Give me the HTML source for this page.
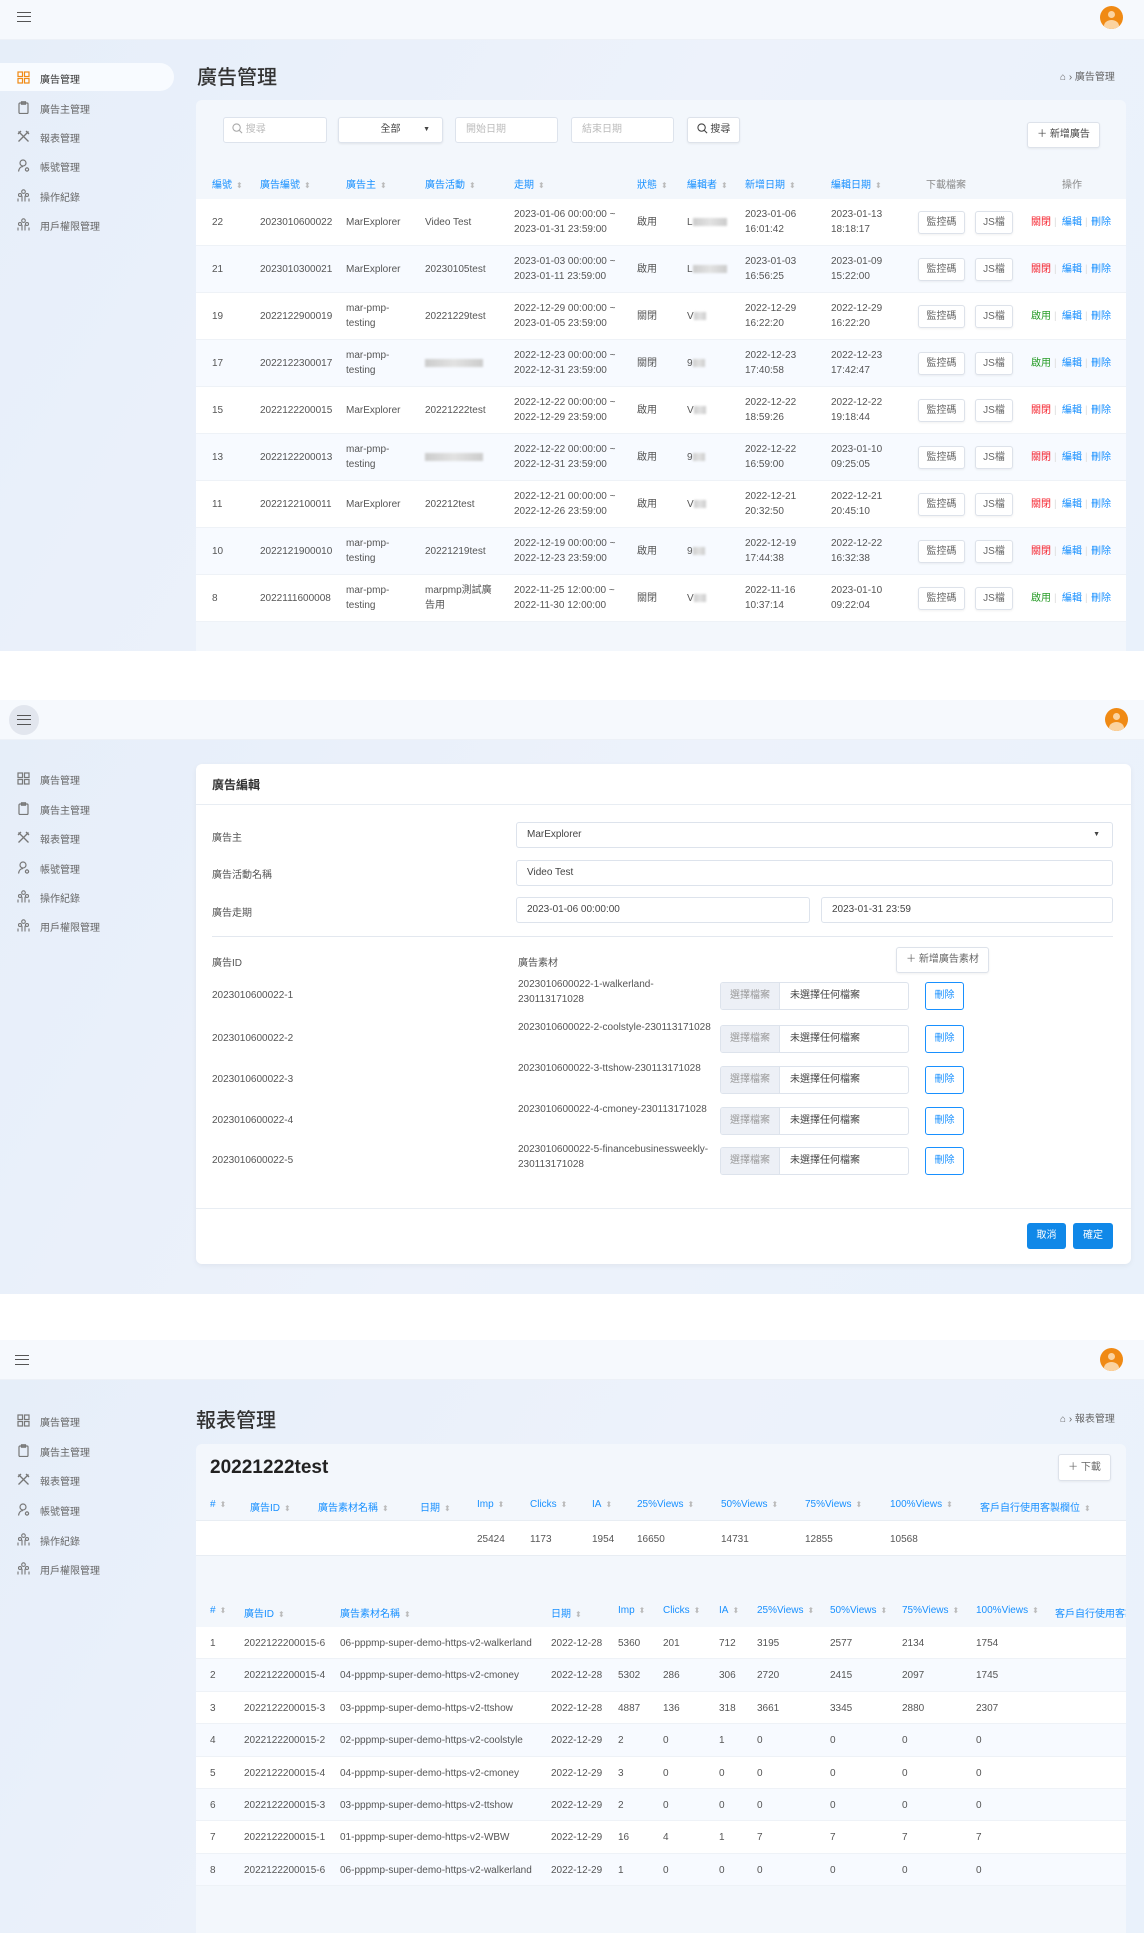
<!DOCTYPE html>
<html><head><meta charset="utf-8">
<style>
*{margin:0;padding:0;box-sizing:border-box}
body{width:1144px;height:1933px;position:relative;background:#fff;font-family:"Liberation Sans","Noto Sans CJK TC",sans-serif;color:#555;font-size:10px;overflow:hidden}
.a{position:absolute;white-space:nowrap}
.sec{position:absolute;left:0;width:1144px;background:linear-gradient(120deg,#e6eef9 0%,#edf2fb 50%,#e9f1fb 100%);overflow:hidden}
.hdr{position:absolute;left:0;top:0;width:1144px;height:40px;background:#f6f9fd;border-bottom:1px solid #edf1f7}
.ham{position:absolute;width:14px;height:10px;border-top:1.5px solid #555;border-bottom:1.5px solid #555}
.ham:after{content:"";position:absolute;left:0;top:3px;width:14px;border-top:1.5px solid #555}
.av{position:absolute;width:23px;height:23px;border-radius:50%;background:#f08a14;overflow:hidden}
.av:before{content:"";position:absolute;left:8px;top:5px;width:7px;height:7px;border-radius:50%;background:#fbd3a0}
.av:after{content:"";position:absolute;left:4px;top:14px;width:15px;height:12px;border-radius:50%;background:#fbd3a0}
.si{position:absolute;left:40px;font-size:10px;color:#666}
.ic{position:absolute;left:17px;width:13px;height:13px}
.card{position:absolute;background:#f3f7fc;border-radius:6px}
.th{position:absolute;color:#1890ff;font-size:10px;white-space:nowrap}
.th i{font-style:normal;color:#bbb;font-size:8px;margin-left:4px}
.row{position:absolute;left:0;background:#fff;border-bottom:1px solid #eef2f7}
.row.alt{background:#f7faff}
.c{position:absolute;font-size:10px;color:#555;line-height:15px;white-space:nowrap}
.btn{position:absolute;border:1px solid #dde2ea;background:#fff;border-radius:3px;font-size:10px;color:#666;text-align:center;box-shadow:0 1px 2px rgba(0,0,0,.06)}
.inp{position:absolute;border:1px solid #dde3ec;background:#fff;border-radius:3px;font-size:10px;color:#bbb;padding-left:10px}
.blur{display:inline-block;width:30px;height:8px;background:linear-gradient(90deg,#ccc,#e2e2e2,#ccc);vertical-align:middle;filter:blur(1px)}
.lbl{position:absolute;left:16px;font-size:10px;color:#555}
</style></head><body>
<svg width="0" height="0" style="position:absolute">
<defs>
<symbol id="i1" viewBox="0 0 13 13"><g fill="none" stroke="currentColor" stroke-width="1.2"><rect x="1" y="1" width="4.5" height="4.5"/><rect x="7.5" y="1" width="4.5" height="4.5"/><rect x="1" y="7.5" width="4.5" height="4.5"/><rect x="7.5" y="7.5" width="4.5" height="4.5"/></g></symbol>
<symbol id="i2" viewBox="0 0 13 13"><g fill="none" stroke="currentColor" stroke-width="1.2"><rect x="2" y="2" width="9" height="10.5" rx="1"/><rect x="4.5" y="0.8" width="4" height="2.4"/></g></symbol>
<symbol id="i3" viewBox="0 0 13 13"><g fill="none" stroke="currentColor" stroke-width="1.3"><path d="M1.5 1.5L11.5 11.5M11.5 1.5L1.5 11.5M1 4l3-3M9 1l3 3"/></g></symbol>
<symbol id="i4" viewBox="0 0 13 13"><g fill="none" stroke="currentColor" stroke-width="1.2"><circle cx="6" cy="4" r="3"/><path d="M1.5 12.5C2 9 4 7.5 6 7.5"/><circle cx="10" cy="10.5" r="1.6"/></g></symbol>
<symbol id="i5" viewBox="0 0 13 13"><g fill="none" stroke="currentColor" stroke-width="1.1"><circle cx="6.5" cy="2.6" r="1.8"/><circle cx="3" cy="6" r="1.5"/><circle cx="10" cy="6" r="1.5"/><path d="M1 12.5V9.5M5 12.5V6.8M8 12.5V6.8M12 12.5V9.5"/></g></symbol>
<symbol id="sr" viewBox="0 0 12 12"><g fill="none" stroke="currentColor" stroke-width="1.2"><circle cx="5" cy="5" r="4"/><path d="M8 8l3 3"/></g></symbol>
</defs></svg>

<!-- ================= SECTION 1 ================= -->
<div class="sec" style="top:0;height:651px">
 <div class="hdr"></div>
 <div class="ham" style="left:17px;top:12px"></div>
 <div class="av" style="left:1100px;top:6px"></div>
 <div class="a" style="left:0;top:63px;width:174px;height:28px;background:#f8fbff;border-radius:0 14px 14px 0"></div>
 <svg class="ic" style="top:71px;color:#f08a14"><use href="#i1"/></svg><div class="si" style="top:71px;color:#333">廣告管理</div>
 <svg class="ic" style="top:101px;color:#777"><use href="#i2"/></svg><div class="si" style="top:101px">廣告主管理</div>
 <svg class="ic" style="top:130px;color:#777"><use href="#i3"/></svg><div class="si" style="top:130px">報表管理</div>
 <svg class="ic" style="top:159px;color:#777"><use href="#i4"/></svg><div class="si" style="top:159px">帳號管理</div>
 <svg class="ic" style="top:189px;color:#777"><use href="#i5"/></svg><div class="si" style="top:189px">操作紀錄</div>
 <svg class="ic" style="top:218px;color:#777"><use href="#i5"/></svg><div class="si" style="top:218px">用戶權限管理</div>
 <div class="a" style="left:197px;top:61px;font-size:20px;color:#333;font-weight:500">廣告管理</div>
 <div class="a" style="left:1060px;top:68px;font-size:10px;color:#666">⌂ › 廣告管理</div>

 <div class="card" style="left:196px;top:100px;width:930px;height:560px">
  <div class="inp" style="left:27px;top:17px;width:104px;height:26px;line-height:24px;padding-left:8px"><svg style="width:11px;height:11px;vertical-align:-2px;color:#aaa"><use href="#sr"/></svg> 搜尋</div>
  <div class="inp" style="left:142px;top:17px;width:105px;height:26px;line-height:24px;color:#444;text-align:center;padding:0;box-shadow:0 1px 2px rgba(0,0,0,.08)">全部 <span style="position:absolute;right:12px;font-size:7px">▼</span></div>
  <div class="inp" style="left:259px;top:17px;width:103px;height:26px;line-height:24px">開始日期</div>
  <div class="inp" style="left:375px;top:17px;width:103px;height:26px;line-height:24px">結束日期</div>
  <div class="btn" style="left:491px;top:17px;width:53px;height:26px;line-height:24px;color:#444"><svg style="width:11px;height:11px;vertical-align:-2px;color:#444"><use href="#sr"/></svg> 搜尋</div>
  <div class="btn" style="left:831px;top:22px;width:73px;height:26px;line-height:24px;color:#444">＋ 新增廣告</div>
  <div class="th" style="left:16px;top:76px">編號<i>⬍</i></div>
  <div class="th" style="left:64px;top:76px">廣告編號<i>⬍</i></div>
  <div class="th" style="left:150px;top:76px">廣告主<i>⬍</i></div>
  <div class="th" style="left:229px;top:76px">廣告活動<i>⬍</i></div>
  <div class="th" style="left:318px;top:76px">走期<i>⬍</i></div>
  <div class="th" style="left:441px;top:76px">狀態<i>⬍</i></div>
  <div class="th" style="left:491px;top:76px">編輯者<i>⬍</i></div>
  <div class="th" style="left:549px;top:76px">新增日期<i>⬍</i></div>
  <div class="th" style="left:635px;top:76px">編輯日期<i>⬍</i></div>
  <div class="th" style="left:730px;top:76px;color:#888">下載檔案</div>
  <div class="th" style="left:866px;top:76px;color:#888">操作</div>
 </div>

 <div id="rows1"></div>
</div>

<!-- ================= SECTION 2 ================= -->
<div class="sec" style="top:700px;height:594px">
 <div class="hdr"></div>
 <div class="a" style="left:9px;top:5px;width:30px;height:30px;border-radius:50%;background:#e2e6ee"></div>
 <div class="ham" style="left:17px;top:15px"></div>
 <div class="av" style="left:1105px;top:8px"></div>
 <svg class="ic" style="top:72px;color:#777"><use href="#i1"/></svg><div class="si" style="top:72px">廣告管理</div>
 <svg class="ic" style="top:102px;color:#777"><use href="#i2"/></svg><div class="si" style="top:102px">廣告主管理</div>
 <svg class="ic" style="top:131px;color:#777"><use href="#i3"/></svg><div class="si" style="top:131px">報表管理</div>
 <svg class="ic" style="top:161px;color:#777"><use href="#i4"/></svg><div class="si" style="top:161px">帳號管理</div>
 <svg class="ic" style="top:190px;color:#777"><use href="#i5"/></svg><div class="si" style="top:190px">操作紀錄</div>
 <svg class="ic" style="top:219px;color:#777"><use href="#i5"/></svg><div class="si" style="top:219px">用戶權限管理</div>

 <div class="card" style="left:196px;top:64px;width:935px;height:500px;background:#fff;box-shadow:0 2px 6px rgba(0,0,0,.05)">
  <div class="a" style="left:16px;top:12px;font-size:12px;color:#333;font-weight:bold">廣告編輯</div>
  <div class="a" style="left:0;top:40px;width:935px;border-top:1px solid #e8edf3"></div>
  <div class="lbl" style="top:65px">廣告主</div>
  <div class="inp" style="left:320px;top:58px;width:597px;height:26px;line-height:24px;color:#444">MarExplorer<span style="position:absolute;right:12px;font-size:7px">▼</span></div>
  <div class="lbl" style="top:102px">廣告活動名稱</div>
  <div class="inp" style="left:320px;top:96px;width:597px;height:26px;line-height:24px;color:#444">Video Test</div>
  <div class="lbl" style="top:140px">廣告走期</div>
  <div class="inp" style="left:320px;top:133px;width:294px;height:26px;line-height:24px;color:#444">2023-01-06 00:00:00</div>
  <div class="inp" style="left:625px;top:133px;width:292px;height:26px;line-height:24px;color:#444">2023-01-31 23:59</div>
  <div class="a" style="left:16px;top:172px;width:901px;border-top:1px solid #e3e8ef"></div>
  <div class="lbl" style="top:190px">廣告ID</div>
  <div class="a" style="left:322px;top:190px;font-size:10px;color:#555">廣告素材</div>
  <div class="btn" style="left:700px;top:183px;width:93px;height:26px;line-height:24px">＋ 新增廣告素材</div>
  <div id="mat"></div>
  <div class="a" style="left:0;top:444px;width:935px;border-top:1px solid #e8edf3"></div>
  <div class="a" style="left:831px;top:459px;width:39px;height:26px;background:#1088e8;border-radius:3px;color:#fff;text-align:center;line-height:26px;font-size:10px">取消</div>
  <div class="a" style="left:877px;top:459px;width:40px;height:26px;background:#1088e8;border-radius:3px;color:#fff;text-align:center;line-height:26px;font-size:10px">確定</div>
 </div>
</div>

<!-- ================= SECTION 3 ================= -->
<div class="sec" style="top:1340px;height:593px">
 <div class="hdr"></div>
 <div class="ham" style="left:15px;top:15px"></div>
 <div class="av" style="left:1100px;top:8px"></div>
 <svg class="ic" style="top:74px;color:#777"><use href="#i1"/></svg><div class="si" style="top:74px">廣告管理</div>
 <svg class="ic" style="top:104px;color:#777"><use href="#i2"/></svg><div class="si" style="top:104px">廣告主管理</div>
 <svg class="ic" style="top:133px;color:#777"><use href="#i3"/></svg><div class="si" style="top:133px">報表管理</div>
 <svg class="ic" style="top:163px;color:#777"><use href="#i4"/></svg><div class="si" style="top:163px">帳號管理</div>
 <svg class="ic" style="top:193px;color:#777"><use href="#i5"/></svg><div class="si" style="top:193px">操作紀錄</div>
 <svg class="ic" style="top:222px;color:#777"><use href="#i5"/></svg><div class="si" style="top:222px">用戶權限管理</div>
 <div class="a" style="left:196px;top:64px;font-size:20px;color:#333;font-weight:500">報表管理</div>
 <div class="a" style="left:1060px;top:70px;font-size:10px;color:#666">⌂ › 報表管理</div>

 <div class="card" style="left:196px;top:104px;width:930px;height:500px;overflow:hidden">
  <div class="a" style="left:14px;top:13px;font-size:19px;color:#222;font-weight:bold">20221222test</div>
  <div class="btn" style="left:862px;top:10px;width:53px;height:27px;line-height:25px">＋ 下載</div>
  <div class="th" style="left:14px;top:55px">#<i>⬍</i></div>
  <div class="th" style="left:54px;top:55px">廣告ID<i>⬍</i></div>
  <div class="th" style="left:122px;top:55px">廣告素材名稱<i>⬍</i></div>
  <div class="th" style="left:224px;top:55px">日期<i>⬍</i></div>
  <div class="th" style="left:281px;top:55px">Imp<i>⬍</i></div>
  <div class="th" style="left:334px;top:55px">Clicks<i>⬍</i></div>
  <div class="th" style="left:396px;top:55px">IA<i>⬍</i></div>
  <div class="th" style="left:441px;top:55px">25%Views<i>⬍</i></div>
  <div class="th" style="left:525px;top:55px">50%Views<i>⬍</i></div>
  <div class="th" style="left:609px;top:55px">75%Views<i>⬍</i></div>
  <div class="th" style="left:694px;top:55px">100%Views<i>⬍</i></div>
  <div class="th" style="left:784px;top:55px">客戶自行使用客製欄位<i>⬍</i></div>
  <div class="a" style="left:0;top:76px;width:930px;height:36px;background:#fff;border-top:1px solid #e8edf3;border-bottom:1px solid #e8edf3"></div>
  <div class="c" style="left:281px;top:88px">25424</div>
  <div class="c" style="left:334px;top:88px">1173</div>
  <div class="c" style="left:396px;top:88px">1954</div>
  <div class="c" style="left:441px;top:88px">16650</div>
  <div class="c" style="left:525px;top:88px">14731</div>
  <div class="c" style="left:609px;top:88px">12855</div>
  <div class="c" style="left:694px;top:88px">10568</div>

  <div class="th" style="left:14px;top:161px">#<i>⬍</i></div>
  <div class="th" style="left:48px;top:161px">廣告ID<i>⬍</i></div>
  <div class="th" style="left:144px;top:161px">廣告素材名稱<i>⬍</i></div>
  <div class="th" style="left:355px;top:161px">日期<i>⬍</i></div>
  <div class="th" style="left:422px;top:161px">Imp<i>⬍</i></div>
  <div class="th" style="left:467px;top:161px">Clicks<i>⬍</i></div>
  <div class="th" style="left:523px;top:161px">IA<i>⬍</i></div>
  <div class="th" style="left:561px;top:161px">25%Views<i>⬍</i></div>
  <div class="th" style="left:634px;top:161px">50%Views<i>⬍</i></div>
  <div class="th" style="left:706px;top:161px">75%Views<i>⬍</i></div>
  <div class="th" style="left:780px;top:161px">100%Views<i>⬍</i></div>
  <div class="th" style="left:859px;top:161px">客戶自行使用客製欄位</div>
  <div id="rows3" class="a" style="left:0;top:183px;width:930px;height:320px;overflow:hidden"></div>
 </div>
</div>

<script>
(function(){
var R=[
["22","2023010600022","MarExplorer","Video Test","2023-01-06 00:00:00 ~","2023-01-31 23:59:00","啟用","L","2023-01-06","16:01:42","2023-01-13","18:18:17",1],
["21","2023010300021","MarExplorer","20230105test","2023-01-03 00:00:00 ~","2023-01-11 23:59:00","啟用","L","2023-01-03","16:56:25","2023-01-09","15:22:00",1],
["19","2022122900019","mar-pmp-<br>testing","20221229test","2022-12-29 00:00:00 ~","2023-01-05 23:59:00","關閉","V","2022-12-29","16:22:20","2022-12-29","16:22:20",0],
["17","2022122300017","mar-pmp-<br>testing","<span class='blur' style='width:58px'></span>","2022-12-23 00:00:00 ~","2022-12-31 23:59:00","關閉","9","2022-12-23","17:40:58","2022-12-23","17:42:47",0],
["15","2022122200015","MarExplorer","20221222test","2022-12-22 00:00:00 ~","2022-12-29 23:59:00","啟用","V","2022-12-22","18:59:26","2022-12-22","19:18:44",1],
["13","2022122200013","mar-pmp-<br>testing","<span class='blur' style='width:58px'></span>","2022-12-22 00:00:00 ~","2022-12-31 23:59:00","啟用","9","2022-12-22","16:59:00","2023-01-10","09:25:05",1],
["11","2022122100011","MarExplorer","202212test","2022-12-21 00:00:00 ~","2022-12-26 23:59:00","啟用","V","2022-12-21","20:32:50","2022-12-21","20:45:10",1],
["10","2022121900010","mar-pmp-<br>testing","20221219test","2022-12-19 00:00:00 ~","2022-12-23 23:59:00","啟用","9","2022-12-19","17:44:38","2022-12-22","16:32:38",1],
["8","2022111600008","mar-pmp-<br>testing","marpmp測試廣<br>告用","2022-11-25 12:00:00 ~","2022-11-30 12:00:00","關閉","V","2022-11-16","10:37:14","2023-01-10","09:22:04",0]];
var h="";
R.forEach(function(r,i){
 var t=199+i*47;
 h+='<div class="row'+(i%2?' alt':'')+'" style="top:'+t+'px;left:196px;width:930px;height:47px">';
 var y1='top:16px', y2='top:8px';
 h+='<div class="c" style="left:16px;'+y1+'">'+r[0]+'</div>';
 h+='<div class="c" style="left:64px;'+y1+'">'+r[1]+'</div>';
 h+='<div class="c" style="left:150px;'+(r[2].indexOf('<br>')>0?y2:y1)+'">'+r[2]+'</div>';
 h+='<div class="c" style="left:229px;'+(r[3].indexOf('<br>')>0?y2:y1)+'">'+r[3]+'</div>';
 h+='<div class="c" style="left:318px;'+y2+'">'+r[4]+'<br>'+r[5]+'</div>';
 h+='<div class="c" style="left:441px;'+y1+'">'+r[6]+'</div>';
 h+='<div class="c" style="left:491px;'+y1+'">'+r[7]+'<span class="blur" style="width:'+(r[7]=='L'?34:12)+'px"></span></div>';
 h+='<div class="c" style="left:549px;'+y2+'">'+r[8]+'<br>'+r[9]+'</div>';
 h+='<div class="c" style="left:635px;'+y2+'">'+r[10]+'<br>'+r[11]+'</div>';
 h+='<div class="btn" style="left:722px;top:12px;width:47px;height:23px;line-height:21px">監控碼</div>';
 h+='<div class="btn" style="left:779px;top:12px;width:38px;height:23px;line-height:21px">JS檔</div>';
 h+='<div class="c" style="left:835px;'+y1+';color:'+(r[12]?'#f5222d':'#2a9d2a')+'">'+(r[12]?'關閉':'啟用')+'</div>';
 h+='<div class="c" style="left:858px;'+y1+';color:#ddd">|</div>';
 h+='<div class="c" style="left:866px;'+y1+';color:#1890ff">編輯</div>';
 h+='<div class="c" style="left:889px;'+y1+';color:#ddd">|</div>';
 h+='<div class="c" style="left:895px;'+y1+';color:#1890ff">刪除</div>';
 h+='</div>';
});
document.getElementById('rows1').innerHTML=h;

var M=[["2023010600022-1","2023010600022-1-walkerland-<br>230113171028",232],
["2023010600022-2","2023010600022-2-coolstyle-230113171028",275],
["2023010600022-3","2023010600022-3-ttshow-230113171028",316],
["2023010600022-4","2023010600022-4-cmoney-230113171028",357],
["2023010600022-5","2023010600022-5-financebusinessweekly-<br>230113171028",397]];
h="";
M.forEach(function(m){
 var t=m[2];
 h+='<div class="lbl" style="top:'+(t-6)+'px">'+m[0]+'</div>';
 h+='<div class="c" style="left:322px;top:'+(t-19)+'px">'+m[1]+'</div>';
 h+='<div class="a" style="left:524px;top:'+(t-14)+'px;width:189px;height:28px;border:1px solid #dde3ec;border-radius:3px;background:#fff;overflow:hidden"><span class="a" style="left:0;top:0;width:59px;height:26px;background:#edf0f6;color:#999;text-align:center;line-height:26px;font-size:10px;border-right:1px solid #dde3ec">選擇檔案</span><span class="a" style="left:69px;top:0;line-height:26px;font-size:10px;color:#444">未選擇任何檔案</span></div>';
 h+='<div class="a" style="left:729px;top:'+(t-14)+'px;width:39px;height:28px;border:1px solid #1890ff;border-radius:3px;background:#fff;color:#1890ff;text-align:center;line-height:26px;font-size:10px">刪除</div>';
});
document.getElementById('mat').innerHTML=h;

var D=[["1","2022122200015-6","06-pppmp-super-demo-https-v2-walkerland","2022-12-28","5360","201","712","3195","2577","2134","1754"],
["2","2022122200015-4","04-pppmp-super-demo-https-v2-cmoney","2022-12-28","5302","286","306","2720","2415","2097","1745"],
["3","2022122200015-3","03-pppmp-super-demo-https-v2-ttshow","2022-12-28","4887","136","318","3661","3345","2880","2307"],
["4","2022122200015-2","02-pppmp-super-demo-https-v2-coolstyle","2022-12-29","2","0","1","0","0","0","0"],
["5","2022122200015-4","04-pppmp-super-demo-https-v2-cmoney","2022-12-29","3","0","0","0","0","0","0"],
["6","2022122200015-3","03-pppmp-super-demo-https-v2-ttshow","2022-12-29","2","0","0","0","0","0","0"],
["7","2022122200015-1","01-pppmp-super-demo-https-v2-WBW","2022-12-29","16","4","1","7","7","7","7"],
["8","2022122200015-6","06-pppmp-super-demo-https-v2-walkerland","2022-12-29","1","0","0","0","0","0","0"]];
var X=[14,48,144,355,422,467,523,561,634,706,780];
h="";
D.forEach(function(d,i){
 h+='<div class="row'+(i%2?' alt':'')+'" style="top:'+(i*32.4)+'px;width:930px;height:32.4px">';
 d.forEach(function(v,j){h+='<div class="c" style="left:'+X[j]+'px;top:9px">'+v+'</div>';});
 h+='</div>';
});
document.getElementById('rows3').innerHTML=h;
})();
</script>
</body></html>
